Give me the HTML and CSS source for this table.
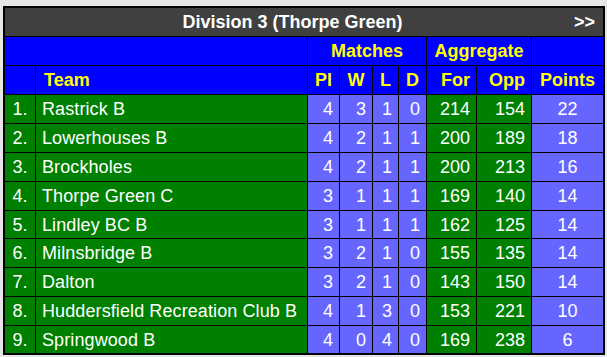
FILE: index.html
```html
<!DOCTYPE html>
<html lang="en">
<head>
<meta charset="utf-8">
<title>Division 3 (Thorpe Green)</title>
<link rel="stylesheet" href="styles.css">
</head>
<body>
<div class="standings">
  <div class="title"><span class="title-text">Division 3 (Thorpe Green)</span><span class="next">&gt;&gt;</span></div>

  <div class="h span2"></div>
  <div class="h span4 c">Matches</div>
  <div class="h span2 c">Aggregate</div>
  <div class="h"></div>

  <div class="h"></div>
  <div class="h team-h">Team</div>
  <div class="h c">Pl</div>
  <div class="h c">W</div>
  <div class="h c">L</div>
  <div class="h c">D</div>
  <div class="h r">For</div>
  <div class="h r">Opp</div>
  <div class="h c">Points</div>

  <div class="g c">1.</div><div class="g team">Rastrick B</div><div class="p r">4</div><div class="p r">3</div><div class="p r">1</div><div class="p r">0</div><div class="g r">214</div><div class="g r">154</div><div class="p c">22</div>
  <div class="g c">2.</div><div class="g team">Lowerhouses B</div><div class="p r">4</div><div class="p r">2</div><div class="p r">1</div><div class="p r">1</div><div class="g r">200</div><div class="g r">189</div><div class="p c">18</div>
  <div class="g c">3.</div><div class="g team">Brockholes</div><div class="p r">4</div><div class="p r">2</div><div class="p r">1</div><div class="p r">1</div><div class="g r">200</div><div class="g r">213</div><div class="p c">16</div>
  <div class="g c">4.</div><div class="g team">Thorpe Green C</div><div class="p r">3</div><div class="p r">1</div><div class="p r">1</div><div class="p r">1</div><div class="g r">169</div><div class="g r">140</div><div class="p c">14</div>
  <div class="g c">5.</div><div class="g team">Lindley BC B</div><div class="p r">3</div><div class="p r">1</div><div class="p r">1</div><div class="p r">1</div><div class="g r">162</div><div class="g r">125</div><div class="p c">14</div>
  <div class="g c">6.</div><div class="g team">Milnsbridge B</div><div class="p r">3</div><div class="p r">2</div><div class="p r">1</div><div class="p r">0</div><div class="g r">155</div><div class="g r">135</div><div class="p c">14</div>
  <div class="g c">7.</div><div class="g team">Dalton</div><div class="p r">3</div><div class="p r">2</div><div class="p r">1</div><div class="p r">0</div><div class="g r">143</div><div class="g r">150</div><div class="p c">14</div>
  <div class="g c">8.</div><div class="g team">Huddersfield Recreation Club B</div><div class="p r">4</div><div class="p r">1</div><div class="p r">3</div><div class="p r">0</div><div class="g r">153</div><div class="g r">221</div><div class="p c">10</div>
  <div class="g c">9.</div><div class="g team">Springwood B</div><div class="p r">4</div><div class="p r">0</div><div class="p r">4</div><div class="p r">0</div><div class="g r">169</div><div class="g r">238</div><div class="p c">6</div>
</div>
</body>
</html>
```
FILE: styles.css
```css
html, body {
  margin: 0;
  padding: 0;
  background: #e6e6e6;
}

body {
  padding: 6px 0 0 3px;
  font-family: "Liberation Sans", Arial, sans-serif;
  font-size: 18px;
}

.standings {
  display: inline-grid;
  grid-template-columns: 30px 271px 31px 32px 25px 27px 49px 54px 71px;
  grid-template-rows: 28px 28px 28px 28px 28px 28px 28px 27px 28px 28px 28px 27px;
  gap: 1px;
  background: #000;
  border: 2px solid #000;
}

.standings > div {
  display: flex;
  align-items: center;
  line-height: 20px;
  white-space: nowrap;
}

.title {
  grid-column: 1 / -1;
  background: #404040;
  color: #fff;
  font-weight: bold;
}

.title-text {
  flex: 1;
  text-align: center;
  padding-left: 6px;
}

.next {
  width: 22px;
  padding-right: 7px;
}

.h {
  background: #0000ff;
  color: #ffff00;
  font-weight: bold;
}

.span2 { grid-column: span 2; }
.span4 { grid-column: span 4; }

.g {
  background: #008000;
  color: #fff;
}

.p {
  background: #6666ff;
  color: #fff;
}

.c { justify-content: center; }
.r { justify-content: flex-end; padding-right: 6px; }

.team { padding-left: 6px; letter-spacing: 0.1px; }
.team-h { padding-left: 8px; }
```
